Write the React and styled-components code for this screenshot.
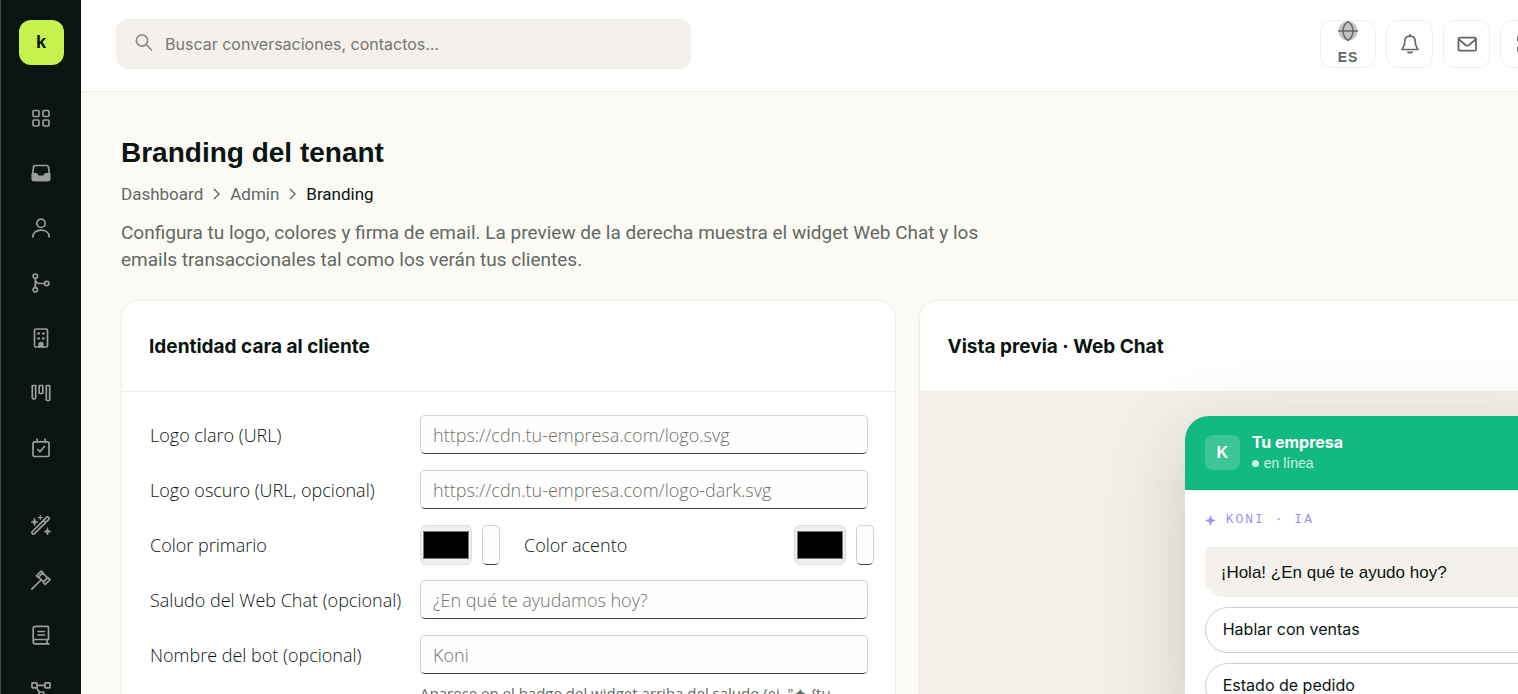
import React from "react";
import styled, { createGlobalStyle, css } from "styled-components";

const ink = "#0a1410";
const muted = "#636864";
const line = "#eeeeec";
const inter = '"Inter", "Liberation Sans", sans-serif';
const roboto = '"Roboto", "Liberation Sans", sans-serif';

const GlobalStyle = createGlobalStyle`
  *, *::before, *::after { box-sizing: border-box; }
  html, body { margin: 0; overflow: hidden; }
  body {
    background: #fbfaf5;
    color: ${ink};
    font-family: "Liberation Sans", Arial, sans-serif;
  }
  button, input { font: inherit; color: inherit; }
  h1, h2, p { margin: 0; }
`;

const Shell = styled.div`
  display: flex;
  min-width: 1890px;
  height: 100vh;
`;

const Sidebar = styled.aside`
  flex: none;
  width: 81px;
  padding: 20px 0 0;
  display: flex;
  flex-direction: column;
  align-items: center;
  gap: 30px;
  background: ${ink};
  border-left: 1px solid #444a47;
`;

const Brand = styled.a`
  flex: none;
  width: 45px;
  height: 45px;
  border-radius: 12px;
  display: grid;
  place-items: center;
  background: #c6f24e;
  color: ${ink};
  font-size: 18px;
  font-weight: 700;
  text-decoration: none;
`;

const Nav = styled.nav`
  display: flex;
  flex-direction: column;
  gap: 32px;
`;

const NavGroup = styled.div`
  display: flex;
  flex-direction: column;
  gap: 10px;
`;

const NavLink = styled.a`
  width: 45px;
  height: 45px;
  display: grid;
  place-items: center;
  color: #9a9e9c;
`;

const Main = styled.div`
  flex: 1;
  min-width: 0;
`;

const Topbar = styled.header`
  height: 92px;
  padding: 0 35px 3px;
  display: flex;
  align-items: center;
  justify-content: space-between;
  background: #fff;
  border-bottom: 1px solid ${line};
`;

const Search = styled.label`
  width: 575px;
  height: 50px;
  padding: 0 18px;
  display: flex;
  align-items: center;
  gap: 10px;
  border-radius: 12px;
  background: #f4f1ec;
  color: #8b8d8a;
`;

const SearchInput = styled.input`
  flex: 1;
  min-width: 0;
  padding: 0 1px;
  border: 0;
  outline: 0;
  background: none;
  font-family: ${inter};
  font-size: 16px;
  &::placeholder { color: #767673; opacity: 1; }
`;

const Actions = styled.div`
  display: flex;
  gap: 10px;
  min-width: 535px;
`;

const ActionButton = styled.button`
  width: ${(p) => (p.$wide ? 56 : 47)}px;
  height: 48px;
  padding: 0;
  display: flex;
  flex-direction: column;
  align-items: center;
  justify-content: center;
  gap: 6px;
  border: 1px solid #f0f0ef;
  border-radius: 12px;
  background: #fff;
  color: #636864;
  font-size: 14px;
  font-weight: 700;
  line-height: 20px;
  letter-spacing: 1px;
`;

const Page = styled.main`
  padding: 41px 40px;
`;

const Title = styled.h1`
  font-size: 28px;
  line-height: 40px;
  font-weight: 700;
`;

const Crumbs = styled.nav`
  margin-top: 9px;
  display: flex;
  align-items: center;
  gap: 8px;
  font-family: ${roboto};
  font-size: 17px;
  line-height: 24px;
  color: ${ink};
`;

const Crumb = styled.a`
  color: ${muted};
  text-decoration: none;
`;

const Intro = styled.p`
  margin-top: 13px;
  max-width: 900px;
  color: ${muted};
  font-family: ${roboto};
  font-size: 19px;
  line-height: 27px;
`;

const Cards = styled.div`
  margin-top: 27px;
  display: grid;
  grid-template-columns: 1fr 1.2fr;
  gap: 23px;
  align-items: start;
`;

const Card = styled.section`
  background: #fff;
  border: 1px solid ${line};
  border-radius: 18px;
  box-shadow: 0 1px 3px rgba(10, 20, 16, 0.05);
`;

const CardHeader = styled.div`
  padding: 31px 27px 29px;
  border-bottom: 1px solid ${line};
`;

const CardTitle = styled.h2`
  font-family: ${inter};
  font-size: 19px;
  line-height: 30px;
  font-weight: 700;
`;

const Form = styled.form`
  padding: 23px 27px 40px 28px;
  display: grid;
  gap: 15px;
  font-family: "Open Sans", "Noto Sans", sans-serif;
  font-weight: 300;
  font-size: 18px;
`;

const FormRow = styled.div`
  display: grid;
  grid-template-columns: 270px 1fr;
  align-items: start;
  min-height: 40px;
`;

const FieldLabel = styled.label`
  line-height: 40px;
`;

const inputLook = css`
  border: 1px solid #d1d1d1;
  border-bottom-color: #424242;
  border-radius: 5px;
  background: #fefefc;
`;

const TextInput = styled.input`
  ${inputLook}
  display: block;
  width: 100%;
  height: 39px;
  padding: 0 12px;
  &::placeholder { color: #707070; opacity: 1; }
`;

const Hint = styled.p`
  margin-top: 8px;
  color: ${muted};
  font-size: 15px;
  font-weight: 400;
  line-height: 22px;
`;

const ColorFields = styled.div`
  display: grid;
  grid-template-columns: 1fr auto;
  margin-right: -6px;
`;

const ColorPair = styled.div`
  display: flex;
  gap: 10px;
`;

const ColorLabel = styled(FieldLabel)`
  margin-left: 14px;
`;

const ColorInput = styled.input`
  width: 52px;
  height: 40px;
  padding: 5px 2px;
  border: 1px solid #dddddd;
  border-radius: 6px;
  background: #efefef;
  &::-webkit-color-swatch-wrapper { padding: 0; }
`;

const HexInput = styled.input`
  ${inputLook}
  width: 18px;
  height: 40px;
  padding: 0 4px;
`;

const PreviewArea = styled.div`
  padding: 24px;
  display: flex;
  justify-content: center;
  background: #f3f0ea;
  border-radius: 0 0 18px 18px;
`;

const Widget = styled.div`
  width: 400px;
  border-radius: 24px;
  background: #fff;
  box-shadow: 0 24px 80px rgba(60, 50, 30, 0.22);
`;

const WidgetHeader = styled.div`
  height: 74px;
  padding: 0 20px 1px;
  display: flex;
  align-items: center;
  gap: 12px;
  border-radius: 24px 24px 0 0;
  background: #12b981;
  color: #fff;
`;

const WidgetAvatar = styled.div`
  width: 35px;
  height: 35px;
  display: grid;
  place-items: center;
  border-radius: 8px;
  background: rgba(255, 255, 255, 0.18);
  font-size: 16px;
  font-weight: 700;
`;

const WidgetName = styled.div`
  font-family: ${inter};
  font-size: 16px;
  line-height: 21px;
  font-weight: 700;
`;

const Status = styled.div`
  display: flex;
  align-items: center;
  gap: 5px;
  font-size: 14px;
  line-height: 20px;
  color: #d2f2e7;
  &::before {
    content: "";
    width: 7px;
    height: 7px;
    border-radius: 50%;
    background: currentColor;
  }
`;

const WidgetBody = styled.div`
  padding: 20px;
  display: flex;
  flex-direction: column;
  gap: 10px;
`;

const BotBadge = styled.div`
  display: flex;
  align-items: center;
  gap: 10px;
  margin-bottom: 7px;
  color: #a78bfa;
  font-family: "Liberation Mono", monospace;
  font-size: 13px;
  line-height: 20px;
  letter-spacing: 2px;
`;

const Bubble = styled.p`
  padding: 14px 16px 12px;
  border-radius: 5px 18px 18px 18px;
  background: #f4f1ec;
  font-size: 17px;
  line-height: 24px;
`;

const Reply = styled.button`
  height: 46px;
  padding: 0 17px 2px;
  border: 1px solid #cccdcc;
  border-radius: 23px;
  background: #fff;
  font-family: ${inter};
  font-size: 16px;
  text-align: left;
`;

function Icon({ size = 20, stroke = 1.7, children }) {
  return (
    <svg
      width={size}
      height={size}
      viewBox="0 0 20 20"
      fill="none"
      stroke="currentColor"
      strokeWidth={stroke}
      strokeLinecap="round"
      strokeLinejoin="round"
      aria-hidden="true"
    >
      {children}
    </svg>
  );
}

const spark = "M3.5 3.2 4.600 5.900 7 7 4.600 8.100 3.500 10.800 2.400 8.100 0 7 2.400 5.900Z";

const primaryNav = [
  ["Dashboard", <><rect x="2" y="2.5" width="6" height="6" rx="1.2" /><rect x="12" y="2.5" width="6" height="6" rx="1.2" /><rect x="2" y="12" width="6" height="6" rx="1.2" /><rect x="12" y="12" width="6" height="6" rx="1.2" /></>],
  ["Bandeja", <><path d="M1.500 11.500 2.600 3.700Q2.800 2.500 4.200 2.500H15.800Q17.200 2.500 17.400 3.700L18.500 11.500V16Q18.500 17.500 17 17.500H3Q1.500 17.500 1.500 16Z" /><path d="M1.500 10.800H5.500L7.200 13.300H12.800L14.500 10.800H18.500V16.500Q18.500 17.500 17.500 17.500H2.500Q1.500 17.500 1.500 16.500Z" fill="currentColor" /></>],
  ["Contactos", <><circle cx="10" cy="5.300" r="4.200" /><path d="M1.800 19C1.800 14.500 5.500 12.200 10 12.200S18.200 14.500 18.200 19" /></>],
  ["Flujos", <><circle cx="4.300" cy="3.200" r="2.200" /><circle cx="4.300" cy="16.800" r="2.200" /><circle cx="15.700" cy="10.500" r="2.200" /><path d="M4.300 5.500V14.500M4.300 6C4.300 9 6 10.500 9 10.500H13.300" /></>],
  ["Empresas", <><rect x="3.500" y="1" width="13" height="18" rx="1.500" /><path d="M7.300 5.500H8M12 5.500H12.700M7.300 10.500H8M12 10.500H12.700" strokeWidth="2" strokeLinecap="square" /><path d="M8.200 19V15.500Q8.200 14.500 10 14.500T11.800 15.500V19" fill="currentColor" /></>],
  ["Tablero", <><path d="M1.300 2.500H4.700V14.500Q4.700 16 3 16T1.300 14.500Z" /><rect x="8.200" y="2.500" width="3.600" height="8" rx="0.500" /><rect x="15.300" y="2.500" width="3.400" height="15" rx="0.500" /></>],
  ["Calendario", <><rect x="2" y="3.800" width="16" height="14.700" rx="1.500" /><path d="M6 1V3.500M14 1V3.500M6.700 11.500 9 13.800 13.300 8.500" /></>],
];

const secondaryNav = [
  ["Automatizar", <><path d="M1.400 16.500 15.500 2.400Q16.500 1.400 17.600 2.400T17.600 4.600L3.500 18.700Q2.400 19.700 1.400 18.700T1.400 16.500ZM12.500 5.400 14.600 7.500" /><path d={spark} fill="currentColor" strokeWidth="0.500" /><path d="M9.300 .5V4.500M7.300 2.500H11.300" strokeWidth="1.200" /><g transform="translate(13 9.500)"><path d={spark} fill="currentColor" strokeWidth="0.500" /></g></>],
  ["Reglas", <><path d="M.8 19.200 9.500 10.500M10.200 1.200 5.500 5.900M5.500 5.900 7 7.500 12 2.700 10.200 1.200M7.800 7.300 12.700 12.200M11.800 3.200 16.700 8.100M12.200 12.200 14.200 14.500 19 9.700 16.900 7.700Z" /></>],
  ["Biblioteca", <><path d="M17.500 14.500V2.500Q17.500 1.300 16.300 1.300H4.500Q2.200 1.300 2.200 3.500V16.700Q2.200 18.800 4.300 18.800H18M17.500 14.500H4.300Q2.200 14.500 2.200 16.700M16 14.500V18.800M7 6.500H13.500M7 10H13.500" /></>],
  ["Integraciones", <><rect x="1" y="2.800" width="5" height="5" rx="0.600" /><rect x="14" y="2.800" width="5" height="5" rx="0.600" /><rect x="7.800" y="12" width="5" height="5" rx="0.600" /><path d="M6 5.300H14M5.500 7.800 8.300 12" /></>],
];

function NavItems({ items }) {
  return (
    <NavGroup>
      {items.map(([name, drawing]) => (
        <NavLink href="#" key={name} aria-label={name}>
          <Icon>{drawing}</Icon>
        </NavLink>
      ))}
    </NavGroup>
  );
}

function Chevron() {
  return (
    <svg width="11" height="12" viewBox="0 0 11 12" fill="none" stroke={muted} strokeWidth="1.400" aria-hidden="true">
      <path d="M3 1 8 6 3 11" />
    </svg>
  );
}

function TextField({ id, label, placeholder, hint }) {
  return (
    <FormRow>
      <FieldLabel htmlFor={id}>{label}</FieldLabel>
      <div>
        <TextInput id={id} placeholder={placeholder} />
        {hint && <Hint>{hint}</Hint>}
      </div>
    </FormRow>
  );
}

export default function App() {
  return (
    <Shell>
      <GlobalStyle />
      <Sidebar>
        <Brand href="#">k</Brand>
        <Nav aria-label="Principal">
          <NavItems items={primaryNav} />
          <NavItems items={secondaryNav} />
        </Nav>
      </Sidebar>
      <Main>
        <Topbar>
          <Search>
            <Icon>
              <circle cx="8" cy="6.500" r="5.600" />
              <path d="M12.200 10.700 17.500 16" />
            </Icon>
            <SearchInput type="search" aria-label="Buscar" placeholder="Buscar conversaciones, contactos…" />
          </Search>
          <Actions>
            <ActionButton $wide>
              <Icon stroke={1.5}>
                <circle cx="10" cy="10" r="9.700" fill="#c1c3c1" stroke="none" />
                <path d="M.5 10H19.500M10 .5C3.500 5 3.500 15 10 19.500C16.500 15 16.500 5 10 .5Z" />
              </Icon>
              ES
            </ActionButton>
            <ActionButton aria-label="Notificaciones">
              <Icon>
                <path d="M10 .8V2.200M10 2.200C6.500 2.200 4.800 4.600 4.800 7.500C4.800 12 3.500 13.200 2 15.500H18C16.500 13.200 15.200 12 15.200 7.500C15.200 4.600 13.500 2.200 10 2.200ZM8 18Q10 19.400 12 18" />
              </Icon>
            </ActionButton>
            <ActionButton aria-label="Mensajes">
              <Icon stroke={1.8}>
                <rect x="1.500" y="3.700" width="17.500" height="13" rx="1.500" />
                <path d="M2 5.500 8.800 11.200Q10.300 12.200 11.800 11.200L18.500 5.500" />
              </Icon>
            </ActionButton>
            <ActionButton aria-label="Aplicaciones">
              <Icon>
                <rect x="4" y="2.800" width="4" height="4" />
                <rect x="13" y="2.800" width="4" height="4" />
                <rect x="4" y="13" width="4" height="4" />
                <rect x="13" y="13" width="4" height="4" />
              </Icon>
            </ActionButton>
          </Actions>
        </Topbar>
        <Page>
          <Title>Branding del tenant</Title>
          <Crumbs aria-label="Ruta">
            <Crumb href="#">Dashboard</Crumb>
            <Chevron />
            <Crumb href="#">Admin</Crumb>
            <Chevron />
            <span>Branding</span>
          </Crumbs>
          <Intro>
            Configura tu logo, colores y firma de email. La preview de la derecha muestra el widget Web Chat y los
            emails transaccionales tal como los verán tus clientes.
          </Intro>
          <Cards>
            <Card>
              <CardHeader>
                <CardTitle>Identidad cara al cliente</CardTitle>
              </CardHeader>
              <Form>
                <TextField id="logo-light" label="Logo claro (URL)" placeholder="https://cdn.tu-empresa.com/logo.svg" />
                <TextField id="logo-dark" label="Logo oscuro (URL, opcional)" placeholder="https://cdn.tu-empresa.com/logo-dark.svg" />
                <FormRow>
                  <FieldLabel htmlFor="primary">Color primario</FieldLabel>
                  <ColorFields>
                    <ColorPair>
                      <ColorInput id="primary" type="color" defaultValue="#000000" />
                      <HexInput aria-label="Color primario hex" />
                      <ColorLabel htmlFor="accent">Color acento</ColorLabel>
                    </ColorPair>
                    <ColorPair>
                      <ColorInput id="accent" type="color" defaultValue="#000000" />
                      <HexInput aria-label="Color acento hex" />
                    </ColorPair>
                  </ColorFields>
                </FormRow>
                <TextField id="greeting" label="Saludo del Web Chat (opcional)" placeholder="¿En qué te ayudamos hoy?" />
                <TextField
                  id="bot"
                  label="Nombre del bot (opcional)"
                  placeholder="Koni"
                  hint={'Aparece en el badge del widget arriba del saludo (ej. "✦ {tu marca} · IA").'}
                />
              </Form>
            </Card>
            <Card>
              <CardHeader>
                <CardTitle>Vista previa · Web Chat</CardTitle>
              </CardHeader>
              <PreviewArea>
                <Widget>
                  <WidgetHeader>
                    <WidgetAvatar>K</WidgetAvatar>
                    <div>
                      <WidgetName>Tu empresa</WidgetName>
                      <Status>en línea</Status>
                    </div>
                  </WidgetHeader>
                  <WidgetBody>
                    <BotBadge>
                      <svg width="11" height="11" viewBox="0 0 11 11" fill="currentColor" aria-hidden="true">
                        <path d="M5.500 0 7 4 11 5.500 7 7 5.500 11 4 7 0 5.500 4 4Z" />
                      </svg>
                      KONI · IA
                    </BotBadge>
                    <Bubble>¡Hola! ¿En qué te ayudo hoy?</Bubble>
                    <Reply>Hablar con ventas</Reply>
                    <Reply>Estado de pedido</Reply>
                  </WidgetBody>
                </Widget>
              </PreviewArea>
            </Card>
          </Cards>
        </Page>
      </Main>
    </Shell>
  );
}
